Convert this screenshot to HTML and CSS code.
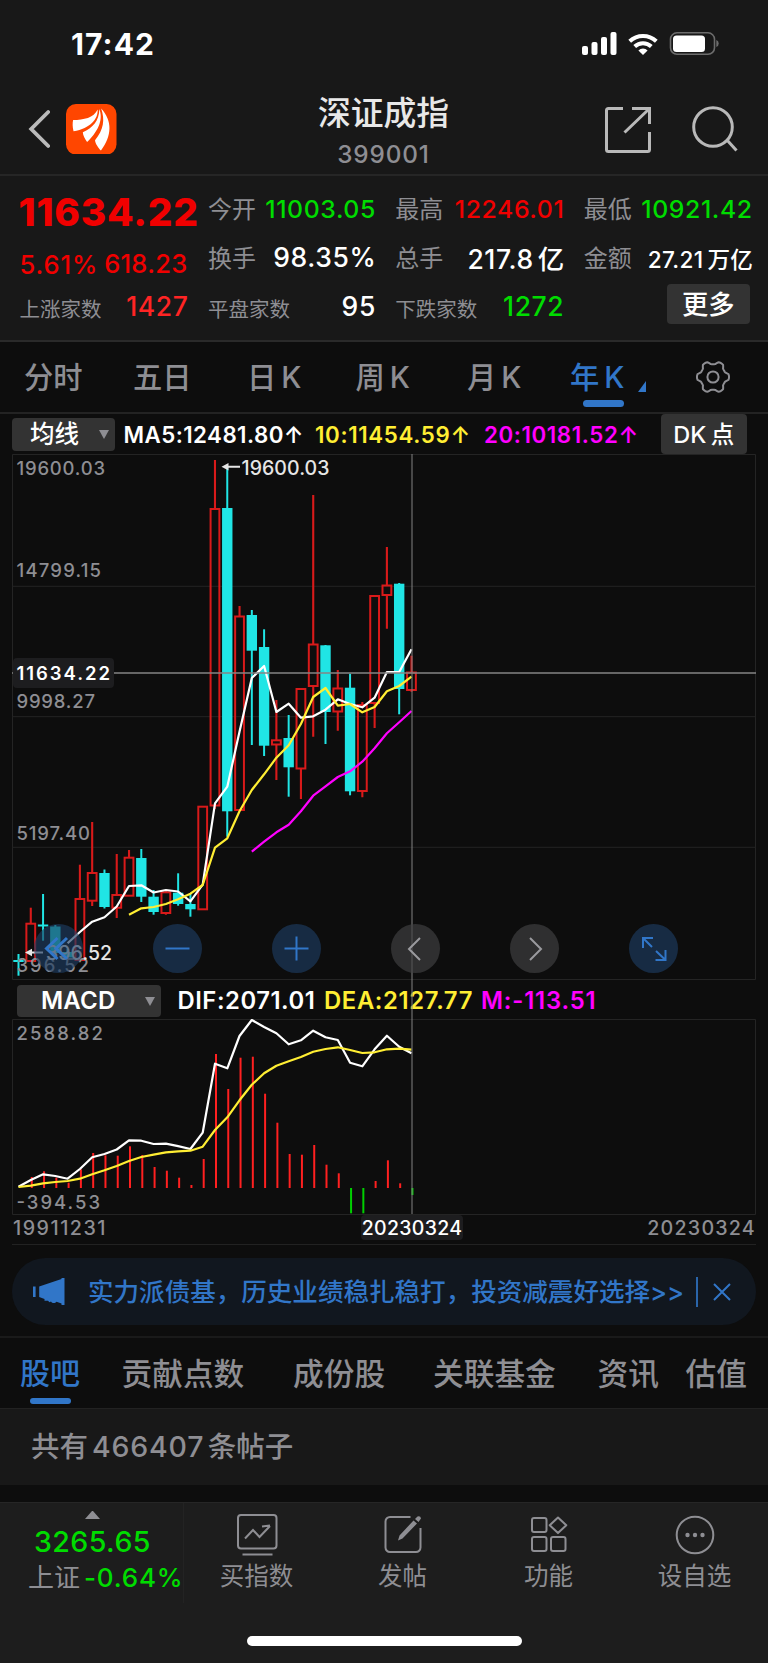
FILE: index.html
```html
<!DOCTYPE html>
<html lang="zh-CN">
<head>
  <meta charset="UTF-8">
  <meta name="viewport" content="width=device-width, initial-scale=1.0">
  <title>深证成指 399001</title>
  <link rel="stylesheet" href="styles.css">
</head>
<body>
  <header class="header">
    <div class="status">
      <span class="time">17:42</span>
      <svg class="status-icons" width="138" height="26" viewBox="581 31 138 26">
        <g fill="#fff">
          <rect x="582" y="46" width="6" height="9" rx="2"/>
          <rect x="591.5" y="42" width="6" height="13" rx="2"/>
          <rect x="601" y="37" width="6" height="18" rx="2"/>
          <rect x="610.5" y="32" width="6" height="23" rx="2"/>
          <path d="M643 55l-4.600-4.600a6.800 6.800 0 0 1 9.200 0z"/>
          <rect x="673" y="35.500" width="32" height="16.500" rx="3.500"/>
        </g>
        <g fill="none" stroke="#fff" stroke-width="4">
          <path d="M629.700 41.200a19.500 19.500 0 0 1 26.600 0"/>
          <path d="M634.700 46.500a12.200 12.200 0 0 1 16.600 0"/>
        </g>
        <rect x="670.500" y="32.800" width="44" height="21.500" rx="6.500" fill="none" stroke="#6c6c6c" stroke-width="1.600"/>
        <path d="M716.300 40v7q2.400-.8 2.400-3.500t-2.400-3.500z" fill="#6c6c6c"/>
      </svg>
    </div>
    <div class="nav">
      <div class="nav-left">
        <svg width="22" height="42" viewBox="0 0 22 42"><path d="M20.200 4L3.200 21l17 17" fill="none" stroke="#bababa" stroke-width="3.800" stroke-linecap="round"/></svg>
        <svg width="50.5" height="50.5" viewBox="0 0 51 51">
          <rect width="51" height="51" rx="10" fill="#ff4600"/>
          <g fill="#fff">
            <path d="M32 5.500C32.500 15 25 24.500 7.600 27.500C6.500 23 6.500 19 7.200 16.200C18 16 28 14 32 5.500z"/>
            <path d="M33.700 5C37 14 35 25 21.300 38.500C19 35 17 31.500 17 28.500C27 24 33.500 17 33.700 5z"/>
            <path d="M35.500 4.500C47 17 46.500 32 35.300 47C33 44.500 29.500 40 29.300 36.500C38 26 39.500 16 35.500 4.500z"/>
          </g>
        </svg>
      </div>
      <div class="title">
        <h1>深证成指</h1>
        <p>399001</p>
      </div>
      <svg class="nav-right" width="136" height="50" viewBox="602 104 136 50" fill="none" stroke="#b9b9b9" stroke-width="3">
        <path d="M623 108.500h-14.500a2 2 0 0 0-2 2v39a2 2 0 0 0 2 2h39a2 2 0 0 0 2-2v-17.500M632 108.500h17.500v15.500M649 109L624.500 132.500"/>
        <circle cx="713" cy="127" r="19.300"/>
        <path d="M726.500 139.500l10 11"/>
      </svg>
    </div>
  </header>

  <section class="quote">
    <div class="col main-col">
      <div class="price">11634.22</div>
      <div class="change"><span class="percent">5.61%</span><span class="diff">618.23</span></div>
      <div class="row small"><label>上涨家数</label><b class="red2">1427</b></div>
    </div>
    <div class="col">
      <div class="row r1"><label>今开</label><b class="green">11003.05</b></div>
      <div class="row r2"><label>换手</label><b>98.35%</b></div>
      <div class="row small"><label>平盘家数</label><b>95</b></div>
    </div>
    <div class="col">
      <div class="row r1"><label>最高</label><b class="red">12246.01</b></div>
      <div class="row r2"><label>总手</label><b>217.8<i class="cn">亿</i></b></div>
      <div class="row small"><label>下跌家数</label><b class="green">1272</b></div>
    </div>
    <div class="col">
      <div class="row r1"><label>最低</label><b class="green">10921.42</b></div>
      <div class="row r2"><label>金额</label><b class="tight">27.21<i class="cn">万亿</i></b></div>
      <button class="more">更多</button>
    </div>
  </section>

  <nav class="period">
    <a>分时</a>
    <a>五日</a>
    <a>日<i class="k">K</i></a>
    <a>周<i class="k">K</i></a>
    <a>月<i class="k">K</i></a>
    <a class="active">年<i class="k">K</i></a>
    <svg width="36" height="34" viewBox="-18 -17 36 34" fill="none" stroke="#8e8e93" stroke-width="2">
      <path id="gear"/>
      <circle r="5.600"/>
    </svg>
  </nav>

  <div class="ma-bar">
    <button class="select avg">均线<i class="caret"></i></button>
    <span class="ma5">MA5:12481.80↑</span>
    <span class="ma10">10:11454.59↑</span>
    <span class="ma20">20:10181.52↑</span>
    <button class="dk">DK<i class="cn">点</i></button>
  </div>

  <main class="charts">
    <svg id="kline" width="768" height="526" viewBox="0 454 768 526"></svg>

    <div class="macd-bar">
      <button class="select macd">MACD<i class="caret"></i></button>
      <span class="dif">DIF:2071.01</span>
      <span class="dea">DEA:2127.77</span>
      <span class="m">M:-113.51</span>
    </div>

    <svg id="macd" width="768" height="196" viewBox="0 1019 768 196"></svg>

    <div class="crosshair"></div>

    <div class="tools">
      <button class="tool back"><svg viewBox="0 0 49 49"><path d="M23.500 14L12.500 24.500l11 10.500M33 14L22 24.500l11 10.500"/></svg></button>
      <button class="tool"><svg viewBox="0 0 49 49"><path d="M12.500 24.500h24"/></svg></button>
      <button class="tool"><svg viewBox="0 0 49 49"><path d="M12.500 24.500h24M24.500 12.500v24"/></svg></button>
      <button class="tool gray"><svg viewBox="0 0 49 49"><path d="M29 14L18 25l11 11"/></svg></button>
      <button class="tool gray"><svg viewBox="0 0 49 49"><path d="M20 14l11 11-11 11"/></svg></button>
      <button class="tool"><svg viewBox="0 0 49 49"><path d="M24 14H14v10M14 14l9 9M26.500 36h10V26M36.500 36l-9.500-9"/></svg></button>
    </div>
  </main>

  <div class="dates">
    <span class="first">19911231</span>
    <span class="current">20230324</span>
    <span class="last">20230324</span>
  </div>

  <div class="banner">
    <svg width="32" height="28" viewBox="0 0 32 28" fill="#3176c8"><path d="M0 8.500h2.600v10.500H0zM6.200 8.500L28.500 1V0h3v27h-3v-1.500l-5-1.700c-1.500 2-4.500 1.500-5.500-.3l-1.500.7-1.500-1.500h-3.500V21l-5.300-2z"/></svg>
    <p>实力派债基，历史业绩稳扎稳打，投资减震好选择<span>&gt;&gt;</span></p>
    <i class="bar"></i>
    <svg width="18" height="18" viewBox="0 0 18 18" stroke="#3176c8" stroke-width="2"><path d="M1 1l16 16M17 1L1 17"/></svg>
  </div>

  <nav class="tabs">
    <a class="active">股吧</a>
    <a>贡献点数</a>
    <a>成份股</a>
    <a>关联基金</a>
    <a>资讯</a>
    <a>估值</a>
  </nav>

  <div class="posts">共有<span>466407</span>条帖子</div>

  <footer class="footer">
    <div class="bottom">
      <div class="index">
        <i class="up"></i>
        <strong>3265.65</strong>
        <p>上证<b>-0.64%</b></p>
      </div>
      <a>
        <svg width="46" height="46" viewBox="0 0 46 46"><rect x="4" y="4" width="38.500" height="33.500" rx="3"/><path d="M8.500 43.500h30M11 27.500l8-8.500 6.500 7L36 15M28 15.500l8-1"/></svg>
        买指数
      </a>
      <a>
        <svg width="46" height="46" viewBox="0 0 46 46"><path d="M30.500 6H10a4.500 4.500 0 0 0-4.500 4.500v26A4.500 4.500 0 0 0 10 41h26a4.500 4.500 0 0 0 4.500-4.500V17"/><path class="solid" d="M33.500 9.500l3.500 3L22.500 27.500l-4.500 2 1.500-5zM35 8l2.500-2.500q3-1 3.500 2L38.500 11z"/></svg>
        发帖
      </a>
      <a>
        <svg width="46" height="46" viewBox="0 0 46 46"><rect x="6" y="7" width="14.500" height="14" rx="2"/><rect x="6" y="26" width="14.500" height="14" rx="2"/><rect x="25" y="26" width="14.500" height="14" rx="2"/><path d="M32 6.500l8.300 7.800-8.300 7.800-8.300-7.800z" stroke-linejoin="round"/></svg>
        功能
      </a>
      <a>
        <svg width="46" height="46" viewBox="0 0 46 46"><circle cx="23" cy="24" r="18.300"/><g class="solid"><circle cx="15.500" cy="24" r="2.200"/><circle cx="23" cy="24" r="2.200"/><circle cx="30.500" cy="24" r="2.200"/></g></svg>
        设自选
      </a>
    </div>
    <div class="home"></div>
  </footer>

  <script src="chart.js"></script>
</body>
</html>
```

FILE: styles.css
```css
* {
  box-sizing: border-box;
}
body {
  margin: 0;
  width: 768px;
  background: #0d0d0d;
  color: #fff;
  font-family: Inter, "Noto Sans CJK SC", sans-serif;
  font-weight: 500;
}
h1, p {
  margin: 0;
}
i {
  font-style: normal;
}
b, strong {
  font-weight: 500;
}
svg {
  display: block;
  flex: none;
}
button {
  border: none;
  padding: 0;
  margin: 0;
  color: #fff;
  background: #333;
  font: inherit;
}
.red { color: #f00000; }
.red2 { color: #ff2424; }
.green { color: #00dc00; }

/* header */
.header {
  height: 176px;
  background: #181818;
  border-bottom: 2px solid #262626;
}
.status {
  height: 88px;
  padding: 0 49px 0 71px;
  display: flex;
  justify-content: space-between;
  align-items: center;
}
.time {
  font-size: 30px;
  font-weight: 700;
  letter-spacing: 1.1px;
}
.nav {
  height: 82px;
  padding: 0 30px 0 28px;
  display: grid;
  grid-template-columns: 136px 1fr 136px;
  align-items: center;
}
.nav-left {
  display: flex;
  align-items: center;
  gap: 16px;
}
.title {
  text-align: center;
  padding: 5px 0 0 1px;
}
.title h1 {
  font-size: 32.8px;
  line-height: 38px;
  font-weight: 500;
  color: #e8e8e8;
}
.title p {
  font-size: 24.3px;
  line-height: 30px;
  margin-top: 7px;
  color: #8e8e93;
  letter-spacing: 0.9px;
}

/* quote */
.quote {
  height: 166px;
  padding: 0 16px 0 19.5px;
  background: #181818;
  border-bottom: 2px solid #2a2a2a;
  display: grid;
  grid-template-columns: 168px 167px 168px 168px;
  column-gap: 20.4px;
}
.price {
  height: 66px;
  margin-left: -1px;
  line-height: 71px;
  font-size: 38.8px;
  font-weight: 800;
  letter-spacing: 0.8px;
  color: #f00000;
  white-space: nowrap;
}
.change {
  height: 39px;
  line-height: 45px;
  display: flex;
  justify-content: space-between;
  color: #f00000;
  font-size: 25.5px;
}
.percent {
  letter-spacing: 0.9px;
}
.diff {
  line-height: 43px;
  letter-spacing: 0.3px;
}
.row {
  display: flex;
  justify-content: space-between;
  align-items: center;
  white-space: nowrap;
}
.row label {
  color: #8e8e93;
  font-size: 24px;
  font-weight: 400;
}
.row b {
  font-size: 26.5px;
  letter-spacing: 0.6px;
}
.r1 {
  height: 66px;
}
.r1 b {
  margin-right: -1px;
  font-size: 24.8px;
  letter-spacing: 0.6px;
}
.r1 label {
  padding-bottom: 3px;
}
.r2 {
  height: 39px;
  padding-bottom: 9px;
}
.r2 b {
  margin-right: -1.5px;
}
.r2 label {
  padding-bottom: 2px;
}
.r2 .tight {
  font-size: 22.6px;
  letter-spacing: 0.3px;
  padding-top: 3px;
}
.cn {
  margin-left: 4px;
}
.small {
  height: 50px;
}
.small b {
  margin-right: -1px;
}
.small label {
  font-size: 20.5px;
  padding-top: 4px;
}
.more {
  display: block;
  margin: 3px 2px 0 auto;
  width: 83px;
  height: 40px;
  border-radius: 4px;
  font-size: 26.3px;
  line-height: 41px;
}

/* period tabs */
.period {
  height: 72px;
  padding: 0 0 4px 24px;
  border-bottom: 2px solid #232323;
  display: grid;
  grid-template-columns: 109px 114px 108.5px 111.5px 103px 124.5px 36px;
  align-items: center;
  color: #8e8e93;
  font-size: 29.3px;
}
.period a {
  position: relative;
}
.period svg {
  margin-top: 4px;
}
.k {
  margin-left: 5px;
}
.period .active {
  color: #3176c8;
}
.period .active::before {
  content: "";
  position: absolute;
  left: 13px;
  bottom: -11px;
  width: 41px;
  height: 7px;
  border-radius: 3.5px;
  background: #3176c8;
}
.period .active::after {
  content: "";
  position: absolute;
  left: 67.5px;
  bottom: 4px;
  border-left: 8px solid transparent;
  border-bottom: 11px solid #3176c8;
}

/* moving averages */
.ma-bar {
  height: 40px;
  padding-left: 12px;
  display: flex;
  align-items: center;
  font-size: 22.3px;
  letter-spacing: 0.45px;
  white-space: nowrap;
}
.ma-bar span {
  padding-top: 1px;
  font-weight: 600;
}
.select {
  position: relative;
  text-align: left;
  border-radius: 4px;
}
.caret {
  position: absolute;
  right: 6px;
  top: 12px;
  border: 5.5px solid transparent;
  border-top: 9px solid #8e8e93;
  border-bottom: none;
}
.avg {
  width: 103px;
  height: 33px;
  padding-left: 18px;
  font-size: 24.5px;
  line-height: 32px;
  letter-spacing: 0;
}
.ma5 {
  width: 191.5px;
  margin-left: 8.5px;
}
.ma10 {
  width: 169px;
  letter-spacing: 0.65px;
  color: #ffee33;
}
.ma20 {
  width: 177px;
  letter-spacing: 0.6px;
  color: #ff00ff;
}
.dk {
  width: 85.5px;
  height: 40px;
  border-radius: 4px;
  font-size: 23.5px;
  line-height: 39px;
  letter-spacing: 0.2px;
}

/* charts */
.charts {
  position: relative;
}
.charts text {
  font-size: 18.5px;
  fill: #8e8e93;
}
.charts .mark {
  fill: #e6e6e6;
  font-size: 19.5px;
}
.charts .now {
  fill: #fff;
  font-weight: 600;
}
.macd-bar {
  height: 39px;
  padding: 2px 0 0 17px;
  display: flex;
  align-items: center;
  font-size: 23.8px;
  font-weight: 600;
  letter-spacing: 0.55px;
  white-space: nowrap;
}
.macd {
  width: 144px;
  height: 32px;
  padding-left: 24px;
  font-size: 24px;
  line-height: 32px;
  letter-spacing: 0.2px;
}
.dif {
  width: 146.5px;
  margin-left: 16.5px;
}
.dea {
  width: 157px;
  letter-spacing: 0.65px;
  color: #ffee33;
}
.m {
  letter-spacing: 0.85px;
  color: #ff00ff;
}
.crosshair {
  position: absolute;
  left: 411px;
  top: 0;
  width: 2px;
  height: 760px;
  background: rgba(130, 130, 130, 0.5);
}
.tools {
  position: absolute;
  left: 34px;
  top: 470px;
  display: flex;
  gap: 70px;
}
.tool {
  width: 49px;
  height: 49px;
  border-radius: 50%;
  background: rgba(29, 60, 97, 0.65);
}
.tool path {
  fill: none;
  stroke: #3176c8;
  stroke-width: 2;
}
.back path {
  stroke-width: 3;
}
.gray {
  background: rgba(66, 66, 68, 0.65);
}
.gray path {
  stroke: #9a9a9e;
}
.dates {
  height: 30px;
  margin: 0 12px;
  border-bottom: 1px solid #222;
  display: grid;
  grid-template-columns: 349px 1fr 120px;
  font-size: 19.7px;
  line-height: 27px;
  color: #8e8e93;
}
.first {
  padding-left: 1px;
  letter-spacing: 1.5px;
}
.current {
  width: 102px;
  height: 25px;
  line-height: 26px;
  text-align: center;
  border-radius: 4px;
  background: #1d1d1f;
  color: #fff;
  font-size: 19.5px;
  letter-spacing: 0.3px;
}
.last {
  text-align: right;
  letter-spacing: 1.2px;
}

/* banner */
.banner {
  height: 67px;
  margin: 13px 12px 11px;
  padding-left: 21px;
  border-radius: 34px;
  background: #11171f;
  color: #3176c8;
  display: flex;
  align-items: center;
}
.banner p {
  width: 608px;
  padding: 0 0 4px 23px;
  font-size: 25.55px;
  white-space: nowrap;
}
.bar {
  width: 2px;
  height: 30px;
  margin: 0 15px 0 23px;
  background: #2a65aa;
}

/* content tabs */
.tabs {
  height: 73px;
  padding: 0 0 4px 20px;
  border-top: 2px solid #1a1a1a;
  border-bottom: 1px solid #222;
  display: grid;
  grid-template-columns: 101.5px 171.5px 140px 164.5px 88px 70px;
  align-items: center;
  font-size: 30.7px;
  color: #8e8e93;
  white-space: nowrap;
}
.tabs .active {
  position: relative;
  font-size: 30px;
  color: #3176c8;
}
.tabs .active::after {
  content: "";
  position: absolute;
  left: 10px;
  bottom: -11px;
  width: 41px;
  height: 6px;
  border-radius: 3px;
  background: #3176c8;
}
.posts {
  height: 76px;
  line-height: 76px;
  padding-left: 31px;
  background: #181818;
  color: #8e8e93;
  font-size: 28.5px;
}
.posts span {
  margin: 0 3.5px 0 4px;
  letter-spacing: 0.8px;
}

/* footer */
.footer {
  height: 162px;
  margin-top: 17px;
  background: #1d1d1d;
  border-top: 1px solid #262626;
}
.bottom {
  height: 100px;
  display: grid;
  grid-template-columns: 184px repeat(4, 146px);
  color: #8e8e93;
  font-size: 24.5px;
}
.index {
  border-right: 1px solid #232323;
  padding: 8px 0 0 28px;
  white-space: nowrap;
}
.up {
  display: block;
  width: 15px;
  margin-left: 57px;
  border: 7.5px solid transparent;
  border-bottom: 8px solid #8e8e93;
  border-top: none;
}
.index strong {
  display: block;
  margin: 5px 0 0 6px;
  font-size: 28.6px;
  line-height: 36px;
  letter-spacing: 0.4px;
  color: #00dc00;
}
.index p {
  font-size: 26px;
  line-height: 36px;
  font-weight: 400;
}
.index b {
  margin-left: 4px;
  letter-spacing: 0.8px;
  color: #00dc00;
}
.bottom a {
  display: flex;
  flex-direction: column;
  align-items: center;
  padding: 8px 1px 0 0;
  font-weight: 400;
  line-height: 36px;
}
.bottom a svg {
  margin-bottom: 1px;
  fill: none;
  stroke: #8e8e93;
  stroke-width: 2;
}
.bottom a .solid {
  fill: #8e8e93;
  stroke: none;
}
.home {
  width: 275px;
  height: 10px;
  margin: 33px 0 0 247px;
  border-radius: 5px;
  background: #fff;
}
```

FILE: chart.js
```javascript
const RED = "#d81a1a";
const CYAN = "#20e5e5";
const STEP = 12.28;
const X0 = 18.5;

// [up(1) / down(0), high, body top, body bottom, low]
const candles = [
  [0, 954, 960, 962, 975.7], [1, 907.7, 923.7, 961, 961], [0, 894, 924.5, 926.5, 940.7],
  [0, 925, 926.5, 953, 953], [0, 949, 952, 957.5, 957.5], [1, 864.7, 899, 960, 960],
  [1, 822, 873, 900.7, 906], [0, 869.5, 873, 907, 908.5], [1, 854, 895, 907.7, 918],
  [1, 850, 857.7, 895.7, 896], [0, 849, 858, 896.7, 902], [0, 890, 896.7, 912, 914.7],
  [1, 891, 892.3, 913, 914.7], [0, 873.3, 892.7, 904, 905.7], [0, 894, 904, 909.3, 916.7],
  [1, 806.7, 806.7, 909.3, 909.3], [1, 460, 509, 805.5, 809], [0, 466.7, 508, 811.3, 836.7],
  [1, 606, 616.5, 810, 810], [0, 610, 615, 650.7, 745], [0, 629.3, 647, 745.7, 756],
  [1, 700, 740.3, 744.5, 780], [0, 715, 738, 767.3, 796.7], [1, 688.7, 689, 768.5, 799],
  [1, 495, 644.5, 686, 736.7], [0, 645, 645.3, 712, 744], [1, 670, 688.5, 711.5, 730.7],
  [0, 673.7, 687.7, 791.3, 795.3], [1, 702, 705, 791, 797.3], [1, 596, 596, 703, 728],
  [1, 547, 585.5, 595, 628.7], [0, 583, 583.7, 689, 714.3], [1, 655.7, 672.5, 690, 691.7]
];
const ma5 = [943.3, 932, 921.7, 917.3, 906.5, 886, 885.3, 892.5, 890, 891.5, 901.3, 884.7,
  803.3, 786.7, 731.7, 678, 666, 712, 703.7, 717.7, 716.3, 709.7, 699.3, 704, 707.3, 697.7, 672, 672, 649.3];
const ma10 = [914.7, 908.3, 907, 904, 899.3, 893.7, 885, 847.7, 838.3, 811.3, 790, 774.3, 757.7,
  745.3, 724, 697, 688, 705.7, 704, 712.3, 707, 691.3, 686, 676.7];
const ma20 = [851.7, 841.7, 832.3, 824.7, 811.3, 795.7, 786.3, 777, 771.3, 761.7, 748.3, 733.3, 722.3, 711];

const dif = [1186.7, 1180, 1174.3, 1176, 1178.7, 1169, 1157.3, 1154, 1149.5, 1140.3, 1140.7, 1144,
  1143.7, 1146.2, 1149, 1132.7, 1063.7, 1068.3, 1036, 1020, 1027, 1033.3, 1044.3, 1040.3, 1030.7,
  1037.3, 1040, 1062.7, 1066.3, 1049.3, 1035.7, 1046.7, 1053.3];
const dea = [1187, 1185.7, 1183.3, 1182, 1181, 1178.7, 1174.3, 1170.3, 1166, 1161, 1157, 1154.7,
  1152.3, 1151.3, 1150.7, 1146.7, 1130, 1117.3, 1100.3, 1084.7, 1073.3, 1065.7, 1061.3, 1057,
  1051.7, 1049, 1047.3, 1050, 1053, 1052.3, 1049.3, 1048.7, 1049.7];
const bars = [1188, 1177, 1171.3, 1177.7, 1182.7, 1169.3, 1153, 1155.3, 1155.7, 1146.3, 1155, 1167,
  1170.7, 1177.7, 1185, 1159, 1054, 1089, 1057.7, 1056.7, 1093.7, 1122.7, 1154, 1154.7, 1145,
  1164.7, 1173.3, 1213.3, 1213.3, 1181, 1160.3, 1183.3, 1195];

const px = i => X0 + i * STEP;

function line(values, start, color) {
  const pts = values.map((y, i) => px(start + i).toFixed(1) + "," + y).join(" ");
  return `<polyline points="${pts}" fill="none" stroke="${color}" stroke-width="2.2" stroke-linejoin="round"/>`;
}

function text(x, y, w, str, cls = "") {
  return `<text x="${x}" y="${y}" textLength="${w}" class="${cls}">${str}</text>`;
}

function drawKline() {
  let s = '<path d="M12.5 454.5H755.500V979.500H12.500zM12 586.300H756M12 716.700H756M12 847.300H756" fill="none" stroke="#242424"/>';
  candles.forEach(([up, high, top, bottom, low], i) => {
    const x = px(i);
    if (up) {
      s += `<path d="M${x} ${high}V${top}M${x} ${bottom}V${low}" stroke="${RED}" stroke-width="2.1"/>`;
      s += `<rect x="${x - 4.4}" y="${top}" width="8.800" height="${bottom - top}" fill="none" stroke="${RED}" stroke-width="2"/>`;
    } else {
      s += `<path d="M${x} ${high}V${low}" stroke="${CYAN}" stroke-width="2"/>`;
      s += `<rect x="${x - 5.2}" y="${top}" width="10.400" height="${bottom - top}" fill="${CYAN}"/>`;
    }
  });
  s += line(ma5, 4, "#fff") + line(ma10, 9, "#ffee33") + line(ma20, 19, "#ff00ff");
  s += '<path d="M12 673H756" stroke="#858585" stroke-width="1.500"/>';
  s += text(16.5, 475, 88.5, "19600.03") + text(16.5, 577, 84.5, "14799.15") + text(16.5, 708, 78.5, "9998.27");
  s += text(16.5, 839.5, 73.5, "5197.40") + text(16.5, 972, 72.5, "396.52");
  s += '<rect x="13" y="658" width="101" height="30" rx="4" fill="#1d1d1f"/>' + text(16.5, 680, 93.5, "11634.22", "now");
  // highest and lowest price marks
  s += '<path d="M228 466.700H240M30 952.500H43" stroke="#e6e6e6" stroke-width="2"/>';
  s += '<path d="M221.500 466.700l7-3.700v7.400zM25 952.500l7-3.700v7.400z" fill="#e6e6e6"/>';
  s += text(241.5, 474.8, 88, "19600.03", "mark") + text(46, 960, 66, "396.52", "mark");
  document.getElementById("kline").innerHTML = s;
}

function drawMacd() {
  let s = '<path d="M12.500 1019.500H755.500V1214.500H12.500z" fill="none" stroke="#242424"/>';
  bars.forEach((y, i) => {
    const color = y > 1188 ? "#00d000" : "#ff2020";
    s += `<path d="M${px(i) + 1} 1188V${y}" stroke="${color}" stroke-width="2"/>`;
  });
  s += line(dif, 0, "#fff") + line(dea, 0, "#ffee33");
  s += text(16.5, 1039.500, 86.5, "2588.82") + text(16.5, 1209, 83.5, "-394.53");
  document.getElementById("macd").innerHTML = s;
}

function drawGear() {
  let d = "";
  for (let i = 0; i <= 72; i++) {
    const a = i * Math.PI / 36;
    const r = 14.4 + 1.7 * Math.tanh(2 * Math.cos(6 * a));
    d += (i ? "L" : "M") + (r * Math.cos(a)).toFixed(2) + " " + (r * Math.sin(a)).toFixed(2);
  }
  document.getElementById("gear").setAttribute("d", d + "z");
}

drawKline();
drawMacd();
drawGear();
```
